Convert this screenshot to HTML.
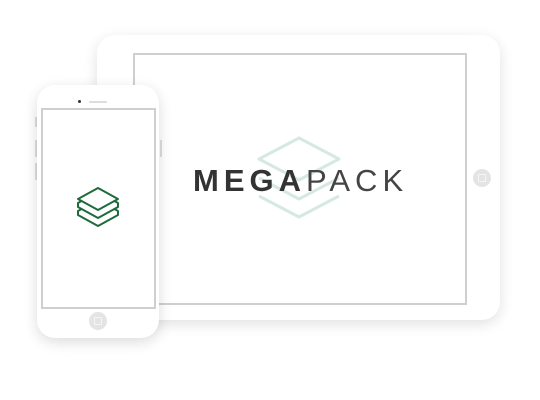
<!DOCTYPE html>
<html><head><style>
body{margin:0;width:540px;height:400px;background:#fff;position:relative;overflow:hidden;font-family:"Liberation Sans",sans-serif}
.tab{position:absolute;left:97px;top:35px;width:403px;height:285px;background:#fff;border-radius:18px;box-shadow:0 4px 14px rgba(0,0,0,.12)}
.tscr{position:absolute;left:133px;top:53px;width:330px;height:248px;border:2px solid #cfcfcf;background:#fff}
.btn{position:absolute;border-radius:50%;background:#e4e4e4}
.btn i{position:absolute;left:50%;top:50%;width:6px;height:6px;margin:-4px 0 0 -4px;border:1px solid #f5f5f5;border-radius:1px}
.ph{position:absolute;left:37px;top:85px;width:122px;height:253px;background:#fff;border-radius:18px;box-shadow:0 4px 14px rgba(0,0,0,.14)}
.pscr{position:absolute;left:41px;top:108px;width:111px;height:197px;border:2px solid #cfcfcf;background:#fff}
.sb{position:absolute;width:2px;background:#ddd}
.t{position:absolute;left:193px;top:163px;font-size:31px;letter-spacing:5px;color:#333;white-space:nowrap}
</style></head><body>
<div class="tab"></div>
<div class="tscr"></div>
<div class="btn" style="left:473px;top:169px;width:18px;height:18px"><i></i></div>
<svg style="position:absolute;left:256px;top:135px" width="86" height="86" viewBox="0 0 86 86">
<g fill="none" stroke="#d6e9e1" stroke-width="3" stroke-linejoin="round">
<path d="M43 3 L83 24 L43 45 L3 24 Z"/>
<path d="M3 43 L43 64 L83 43"/>
<path d="M3 61 L43 82 L83 61"/>
</g></svg>
<div class="t"><b>MEGA</b><span style="font-weight:300;color:#444">PACK</span></div>
<div class="sb" style="left:35px;top:117px;height:10px"></div>
<div class="sb" style="left:35px;top:140px;height:17px"></div>
<div class="sb" style="left:35px;top:163px;height:17px"></div>
<div class="sb" style="left:160px;top:140px;height:17px"></div>
<div class="ph"></div>
<div class="pscr"></div>
<div style="position:absolute;left:78px;top:100px;width:3px;height:3px;border-radius:50%;background:#333"></div>
<div style="position:absolute;left:89px;top:101px;width:18px;height:2px;border-radius:1px;background:#ddd"></div>
<div class="btn" style="left:89px;top:312px;width:18px;height:18px"><i></i></div>
<svg style="position:absolute;left:76px;top:186px" width="44" height="44" viewBox="0 0 44 44">
<g fill="none" stroke="#1d6b3a" stroke-width="2" stroke-linejoin="round">
<path d="M22 2 L42 13 L22 24 L2 13 Z"/>
<path d="M5.5 15 L2 17 L2 21 L22 32 L42 21 L42 17 L38.5 15"/>
<path d="M5.5 23 L2 25 L2 29 L22 40 L42 29 L42 25 L38.5 23"/>
</g></svg>
</body></html>
